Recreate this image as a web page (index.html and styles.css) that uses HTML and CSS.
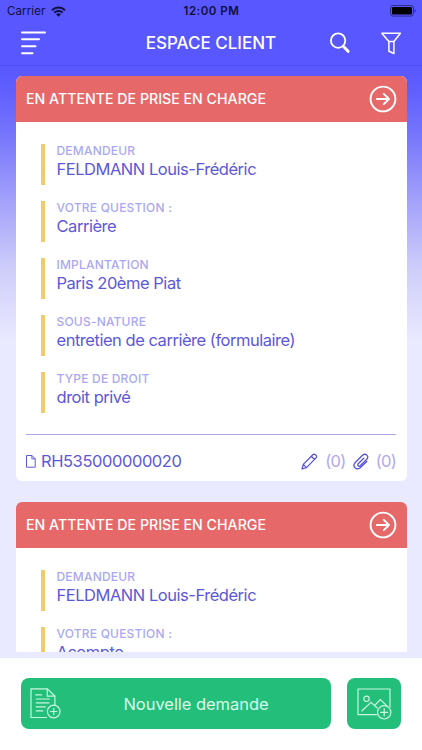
FILE: index.html
```html
<!DOCTYPE html>
<html lang="fr">
<head>
    <meta charset="UTF-8">
    <meta name="viewport" content="width=device-width, initial-scale=1.0">
    <title>Espace client</title>
    <link rel="stylesheet" href="styles.css">
</head>
<body>
    <header>
        <div class="status-bar">
            <div class="carrier">
                <span>Carrier</span>
                <svg width="15" height="11" viewBox="0 0 15 11">
                    <path d="M1 4.2a9.3 9.3 0 0 1 13 0M3.3 6.6a6 6 0 0 1 8.4 0" fill="none" stroke="#10103a" stroke-width="2"/>
                    <path d="M5.1 8.3a3.5 3.5 0 0 1 4.8 0L7.5 10.8z" fill="#10103a"/>
                </svg>
            </div>
            <div class="clock">12:00 PM</div>
            <div class="battery">
                <svg width="26" height="12" viewBox="0 0 26 12">
                    <rect x=".5" y=".5" width="23" height="10.6" rx="2.6" fill="none" stroke="#2c2c8c"/>
                    <rect x="2" y="2" width="20" height="7.6" rx="1.3" fill="#000"/>
                    <path d="M24.6 4v3.6q1.2-.5 1.2-1.8T24.6 4z" fill="#2c2c8c"/>
                </svg>
            </div>
        </div>
        <nav class="nav-bar">
            <button class="icon-button" aria-label="Menu">
                <svg width="26" height="24" viewBox="0 0 26 24" stroke="#fff" stroke-width="2" stroke-linecap="round">
                    <path d="M2 1.400h23M2 8.300h17M2 15.300h13.500M2 22.200h10.500"/>
                </svg>
            </button>
            <h1>ESPACE CLIENT</h1>
            <div class="nav-actions">
                <button class="icon-button" aria-label="Rechercher">
                    <svg width="21" height="22" viewBox="0 0 21 22" fill="none" stroke="#fff">
                        <circle cx="8.100" cy="8.600" r="7.200" stroke-width="1.800"/>
                        <path d="M13.100 13.800l1.500 1.800" stroke-width="1.800"/>
                        <path d="M14 15l4.100 4.300" stroke-width="3" stroke-linecap="round"/>
                    </svg>
                </button>
                <button class="icon-button" aria-label="Filtrer">
                    <svg width="21" height="23" viewBox="0 0 21 23" fill="none" stroke="#fff" stroke-width="1.500" stroke-linejoin="round">
                        <path d="M.8 1.200h18.600l-6.500 8.300v12l-5-2.200V9.500zM7.900 9.500h5"/>
                    </svg>
                </button>
            </div>
        </nav>
    </header>

    <main>
        <section class="card">
            <div class="card-header">
                <h2>EN ATTENTE DE PRISE EN CHARGE</h2>
                <svg width="28" height="28" viewBox="0 0 28 28" fill="none" stroke="#fff" stroke-width="1.900" stroke-linecap="round" stroke-linejoin="round">
                    <circle cx="14" cy="14" r="12.400"/>
                    <path d="M7.800 14h12M14.800 8.800L20 14l-5.200 5.200"/>
                </svg>
            </div>
            <div class="fields">
                <div class="field">
                    <div class="label">DEMANDEUR</div>
                    <div class="value">FELDMANN Louis-Frédéric</div>
                </div>
                <div class="field">
                    <div class="label">VOTRE QUESTION :</div>
                    <div class="value">Carrière</div>
                </div>
                <div class="field">
                    <div class="label">IMPLANTATION</div>
                    <div class="value">Paris 20ème Piat</div>
                </div>
                <div class="field">
                    <div class="label">SOUS-NATURE</div>
                    <div class="value">entretien de carrière (formulaire)</div>
                </div>
                <div class="field">
                    <div class="label">TYPE DE DROIT</div>
                    <div class="value">droit privé</div>
                </div>
            </div>
            <div class="card-footer">
                <div class="reference">
                    <svg width="10" height="13" viewBox="0 0 10 13" fill="none" stroke="#5d58d8">
                        <path d="M.5.5h5.500l3.200 3.200v8.500H.5zM5.900.5v3.300h3.300"/>
                    </svg>
                    <span>RH535000000020</span>
                </div>
                <div class="counters">
                    <svg width="17" height="17" viewBox="0 0 17 17" fill="none" stroke="#5754da" stroke-width="1.300" stroke-linejoin="round">
                        <path d="M1 16l1.300-4.600L11.800 1.700q1.200-1.200 2.900.2t.3 3L5.500 14.600zM2.300 11.400l3.200 3.200M10.300 3.300l3.200 3.200"/>
                    </svg>
                    <span class="count">(0)</span>
                    <svg width="16" height="17" viewBox="0 0 16 17" fill="none" stroke="#5754da" stroke-width="1.300" stroke-linecap="round" stroke-linejoin="round">
                        <path d="M10.800 5.300l-5.600 5.400c-1.500 1.600.6 3.300 2 2l6.400-6.200c3-3.200-.9-7-4.100-4.200L2.200 9.500c-3.300 3.700 1.200 8.500 5 5.200l6.600-6.200"/>
                    </svg>
                    <span class="count">(0)</span>
                </div>
            </div>
        </section>

        <section class="card">
            <div class="card-header">
                <h2>EN ATTENTE DE PRISE EN CHARGE</h2>
                <svg width="28" height="28" viewBox="0 0 28 28" fill="none" stroke="#fff" stroke-width="1.900" stroke-linecap="round" stroke-linejoin="round">
                    <circle cx="14" cy="14" r="12.400"/>
                    <path d="M7.800 14h12M14.800 8.800L20 14l-5.200 5.200"/>
                </svg>
            </div>
            <div class="fields">
                <div class="field">
                    <div class="label">DEMANDEUR</div>
                    <div class="value">FELDMANN Louis-Frédéric</div>
                </div>
                <div class="field">
                    <div class="label">VOTRE QUESTION :</div>
                    <div class="value">Acompte</div>
                </div>
            </div>
        </section>
    </main>

    <footer>
        <button class="new-request">
            <svg width="31" height="31" viewBox="0 0 31 31" fill="none" stroke="#c9f5df" stroke-width="1.200">
                <path d="M17 29.500H1V.8h16.300l7.600 7.300v9.300M17.300.8v7.300h7.600M5.200 6.900h6.800M5.800 11h14M5.800 14.900h13.500M5.800 18.900h10M5.800 22.900h7.500"/>
                <circle cx="23.700" cy="23.500" r="6.300"/>
                <path d="M23.700 19.900v7.200M20.100 23.500h7.200"/>
            </svg>
            <span>Nouvelle demande</span>
        </button>
        <button class="new-photo" aria-label="Ajouter une photo">
            <svg width="35" height="32" viewBox="0 0 35 32" fill="none" stroke="#c9f5df" stroke-width="1.200">
                <path d="M20.500 26.700H1V1h32v18.500M4.500 23.300l9.500-9 6.500 6M17.500 17.500l5.800-6 7.400 7.100"/>
                <circle cx="9.500" cy="10.800" r="2.700"/>
                <circle cx="27.200" cy="24.300" r="6.700"/>
                <path d="M27.200 20.300v8M23.200 24.300h8"/>
            </svg>
        </button>
    </footer>
</body>
</html>
```

FILE: styles.css
```css
* {
    box-sizing: border-box;
}
body {
    font-family: Inter, "Liberation Sans", sans-serif;
    margin: 0;
    height: 750px;
    display: flex;
    flex-direction: column;
    overflow: hidden;
    background: linear-gradient(#5957ff 66px, #5e5dff 85px, #7776fc 135px, #a9a7fa 210px, #cfcefa 270px, #e9e9ff 340px);
}
h1, h2 {
    margin: 0;
}
svg {
    display: block;
    flex-shrink: 0;
}
button {
    font-family: inherit;
    border: none;
    padding: 0;
    background: none;
    cursor: pointer;
}
header {
    height: 66px;
    flex-shrink: 0;
    background-color: #5957ff;
    border-bottom: 1px solid #504eee;
}
.status-bar {
    height: 22px;
    display: grid;
    grid-template-columns: 1fr auto 1fr;
    align-items: center;
    padding: 0 6px 0 7px;
    font-size: 11.5px;
    color: #10103a;
}
.carrier {
    display: flex;
    align-items: center;
    gap: 6px;
    letter-spacing: 0.1px;
}
.clock {
    font-weight: 600;
    letter-spacing: 0.5px;
}
.battery {
    justify-self: end;
}
.nav-bar {
    height: 42px;
    display: grid;
    grid-template-columns: 1fr auto 1fr;
    align-items: center;
    padding: 0 20px;
}
.icon-button {
    justify-self: start;
}
h1 {
    font-size: 17px;
    font-weight: 500;
    color: #fff;
}
.nav-actions {
    display: flex;
    justify-content: flex-end;
    align-items: center;
    gap: 30px;
}
main {
    height: 586px;
    flex-shrink: 0;
    overflow: hidden;
    padding: 9.5px 15.5px 0;
}
.card {
    height: 405px;
    margin-bottom: 21px;
    border-radius: 6px;
    background-color: #fff;
    overflow: hidden;
}
.card-header {
    height: 46.5px;
    display: flex;
    align-items: center;
    justify-content: space-between;
    padding: 0 10px 0 10.5px;
    background-color: #e66869;
}
h2 {
    font-size: 14.2px;
    font-weight: 500;
    color: #fff;
}
.fields {
    display: flex;
    flex-direction: column;
    gap: 16px;
    padding: 22px 25.5px;
}
.field {
    height: 41px;
    border-left: 4px solid #f0ca6b;
    padding-left: 11.5px;
}
.label {
    font-size: 12px;
    line-height: 14px;
    font-weight: 500;
    color: #aaa8f2;
    letter-spacing: 0.2px;
}
.value {
    font-size: 16.5px;
    line-height: 23px;
    color: #5d58d8;
    letter-spacing: -0.47px;
    white-space: nowrap;
}
.card-footer {
    height: 47px;
    margin: -1px 10.5px 0;
    border-top: 1px solid #aaa6e6;
    display: flex;
    align-items: center;
    justify-content: space-between;
    padding-top: 6px;
    font-size: 16.5px;
    letter-spacing: -0.43px;
    color: #5d58d8;
}
.reference {
    display: flex;
    align-items: center;
    gap: 5px;
}
.counters {
    display: flex;
    align-items: center;
    gap: 7px;
}
.count {
    color: #b2a8ef;
    letter-spacing: -0.7px;
}
footer {
    height: 92px;
    margin-top: auto;
    flex-shrink: 0;
    display: flex;
    gap: 16px;
    padding: 20px 21px 21px;
    background-color: #fff;
}
.new-request, .new-photo {
    height: 51px;
    border-radius: 8px;
    background-color: #23bf7a;
}
.new-request {
    flex: 1;
    display: grid;
    grid-template-columns: 31px 1fr;
    align-items: center;
    padding-left: 9px;
    font-size: 16.5px;
    letter-spacing: -0.05px;
    color: #d9faea;
}
.new-photo {
    width: 54px;
    display: flex;
    align-items: center;
    justify-content: center;
}
```
